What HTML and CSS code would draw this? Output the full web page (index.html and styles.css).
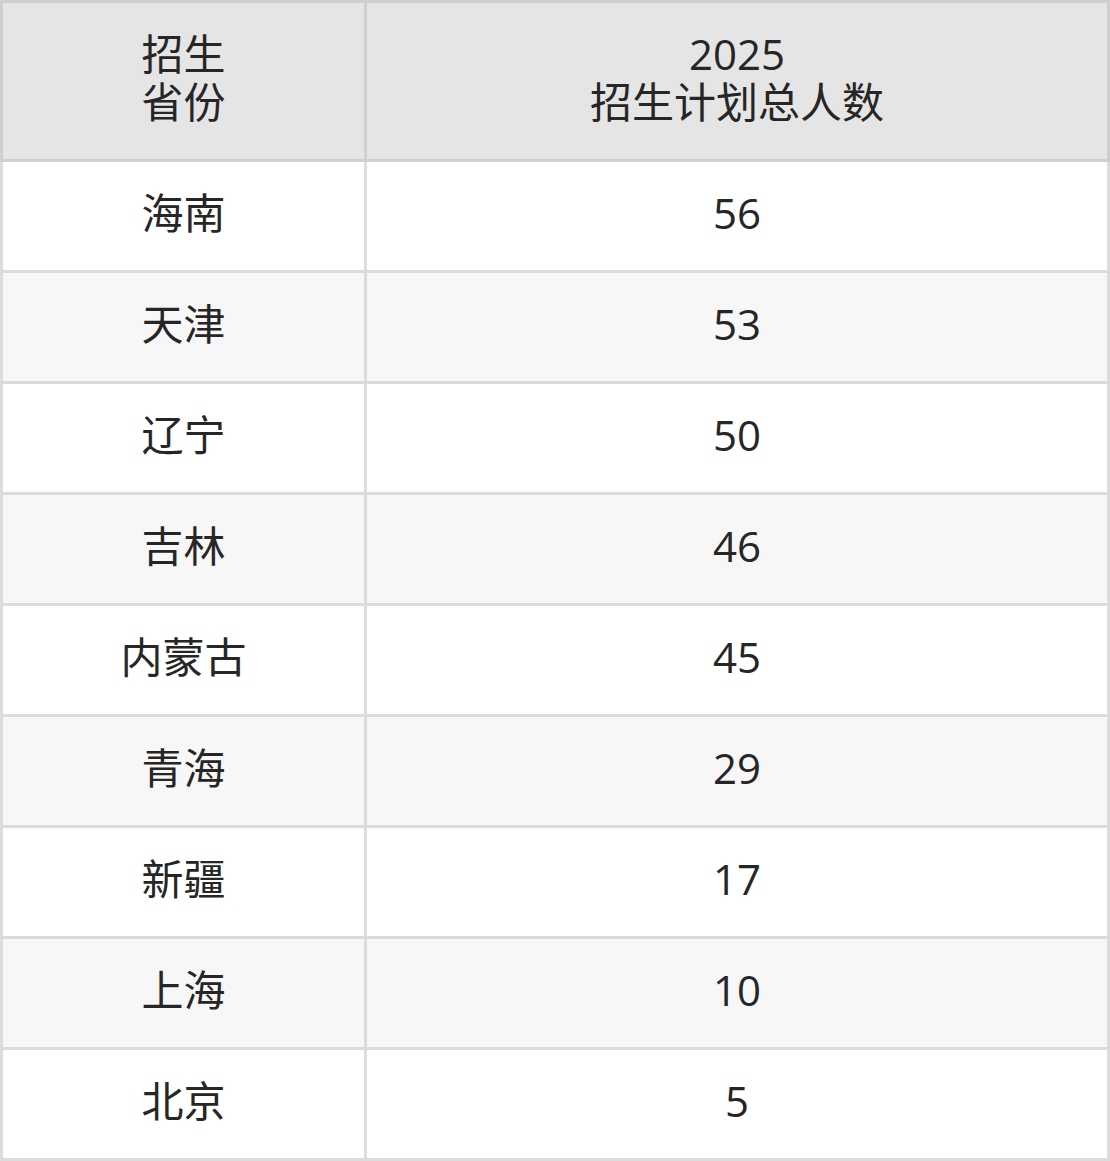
FILE: index.html
```html
<!DOCTYPE html>
<html lang="zh">
<head>
<meta charset="utf-8">
<link rel="stylesheet" href="styles.css">
</head>
<body>
<table class="plan">
  <colgroup><col class="c1"><col class="c2"></colgroup>
  <thead>
    <tr><th>招生<br>省份</th><th>2025<br>招生计划总人数</th></tr>
  </thead>
  <tbody>
    <tr><td>海南</td><td>56</td></tr>
    <tr><td>天津</td><td>53</td></tr>
    <tr><td>辽宁</td><td>50</td></tr>
    <tr><td>吉林</td><td>46</td></tr>
    <tr><td>内蒙古</td><td>45</td></tr>
    <tr><td>青海</td><td>29</td></tr>
    <tr><td>新疆</td><td>17</td></tr>
    <tr><td>上海</td><td>10</td></tr>
    <tr><td>北京</td><td>5</td></tr>
  </tbody>
</table>
</body>
</html>
```
FILE: styles.css
```css
html, body { margin: 0; padding: 0; background: #fff; }
.plan {
  width: 1110px;
  border-collapse: collapse;
  table-layout: fixed;
  font-family: "Open Sans", "Noto Sans CJK SC", sans-serif;
  font-size: 42px;
  line-height: 48px;
  color: #262626;
  text-align: center;
}
.c1 { width: 364px; }
.plan th, .plan td {
  border: 3px solid #dcdcdc;
  padding: 0 0 7px 0;
  font-weight: normal;
}
.plan th {
  background: #e5e5e5;
  border-color: #cfcfcf;
  height: 149px;
}
.plan td { height: 101px; }
.plan tbody tr:nth-child(even) td { background: #f7f7f7; }
.plan tbody tr:nth-child(odd) td { background: #fff; }
```
